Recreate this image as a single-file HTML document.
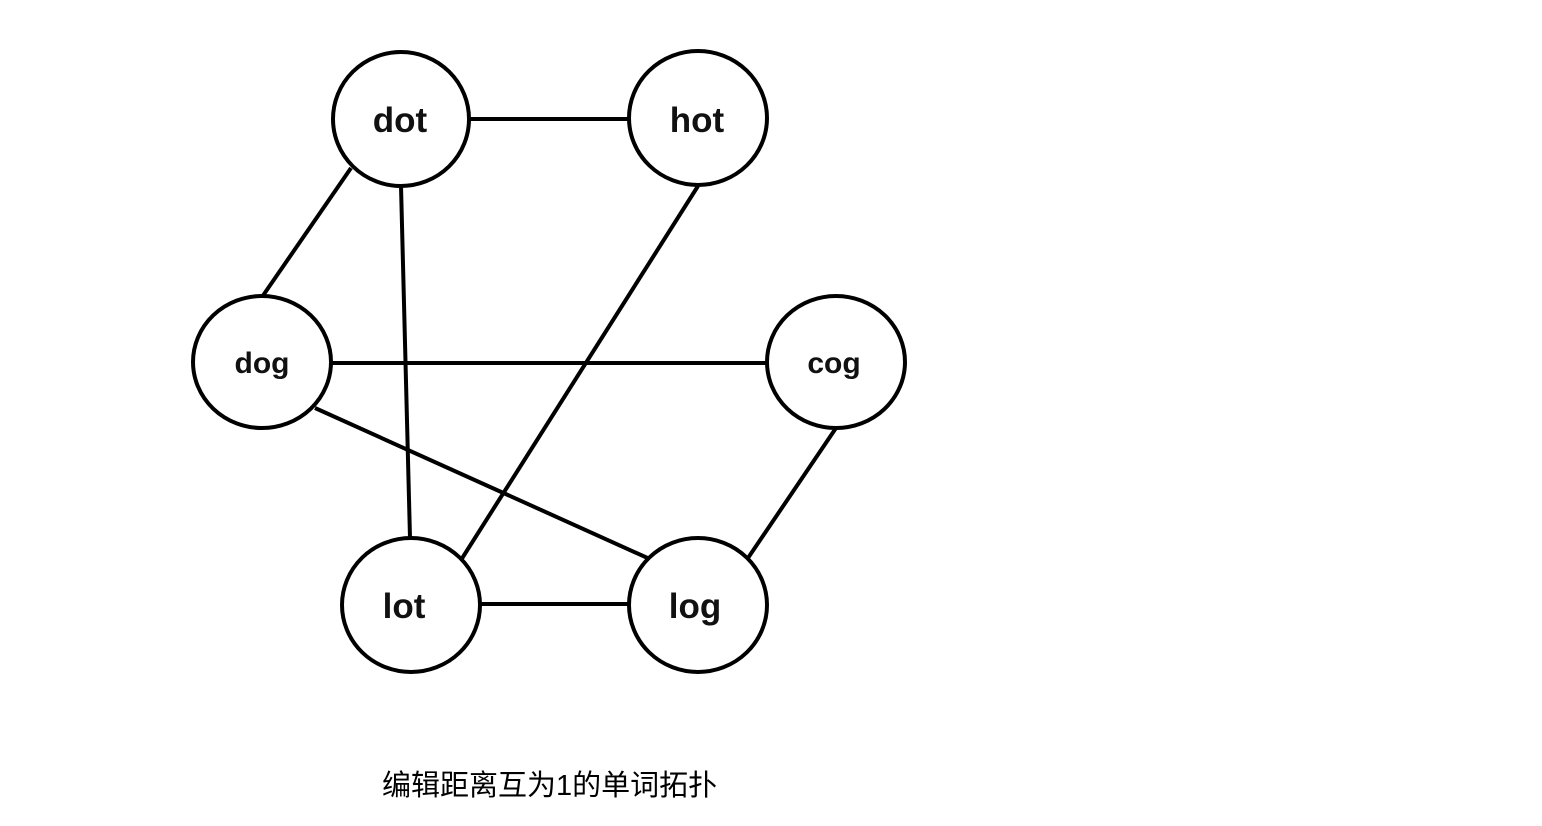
<!DOCTYPE html>
<html><head><meta charset="utf-8"><style>
html,body{margin:0;padding:0;background:#fff;width:1542px;height:826px;overflow:hidden}
svg{display:block}
</style></head><body>
<svg width="1542" height="826" xmlns="http://www.w3.org/2000/svg">
<g stroke="#000" stroke-width="4" fill="none">
<line x1="470" y1="119" x2="628" y2="119"/>
<line x1="351" y1="168" x2="262" y2="297"/>
<line x1="401" y1="186" x2="410" y2="538"/>
<line x1="698" y1="186" x2="461" y2="560"/>
<line x1="331" y1="363" x2="766" y2="363"/>
<line x1="315" y1="408" x2="652" y2="560"/>
<line x1="836" y1="428" x2="748" y2="558"/>
<line x1="481" y1="604" x2="628" y2="604"/>
</g>
<g stroke="#000" stroke-width="4" fill="#fff">
<ellipse cx="401" cy="119" rx="68" ry="67"/>
<ellipse cx="698" cy="118" rx="69" ry="67"/>
<ellipse cx="262" cy="362" rx="69" ry="66"/>
<ellipse cx="836" cy="362" rx="69" ry="66"/>
<ellipse cx="411" cy="605" rx="69" ry="67"/>
<ellipse cx="698" cy="605" rx="69" ry="67"/>
</g>
<g font-family="Liberation Sans, sans-serif" font-weight="bold" text-anchor="middle" fill="#111">
<text x="400" y="132" font-size="35">dot</text>
<text x="697" y="132" font-size="35">hot</text>
<text x="262" y="373" font-size="30">dog</text>
<text x="834" y="373" font-size="30">cog</text>
<text x="404" y="618" font-size="35">lot</text>
<text x="695" y="618" font-size="35">log</text>
</g>
<text x="382" y="795" font-size="29" font-family="Liberation Sans, 'Noto Sans CJK SC', sans-serif" fill="#000">编辑距离互为1的单词拓扑</text>
</svg>
</body></html>
